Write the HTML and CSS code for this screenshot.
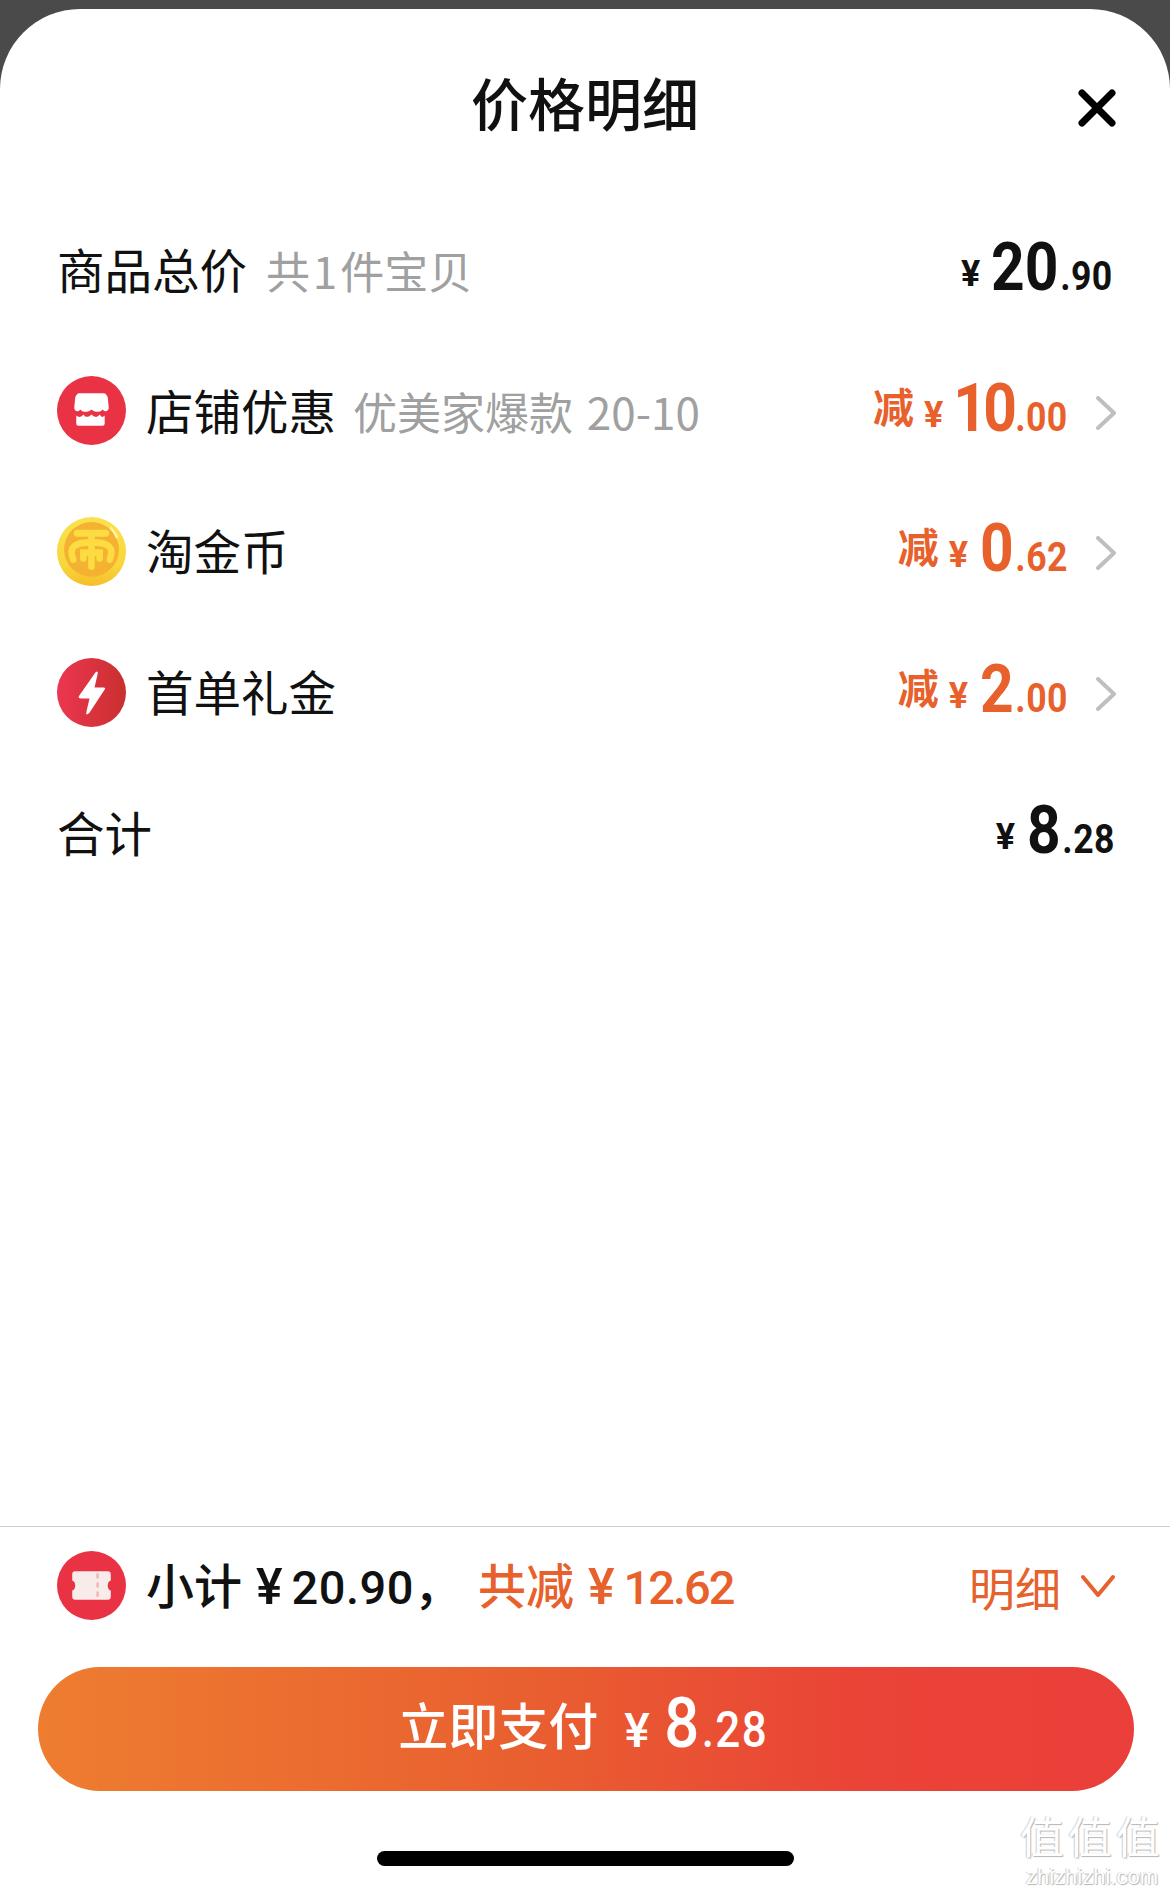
FILE: index.html
```html
<!DOCTYPE html>
<html lang="zh-CN">
<head>
  <meta charset="UTF-8">
  <meta name="viewport" content="width=device-width, initial-scale=1.0">
  <title>价格明细</title>
  <link rel="stylesheet" href="styles.css">
</head>
<body>
  <div class="sheet">
    <header class="sheet-header">
      <h1 class="title">价格明细</h1>
      <svg class="close" width="38" height="38" viewBox="0 0 38 38">
        <path d="M4 4 L34 34 M34 4 L4 34" stroke="#000" stroke-width="7" stroke-linecap="round" fill="none"/>
      </svg>
    </header>

    <ul class="rows">
      <li class="row">
        <span class="label">商品总价</span>
        <span class="note note-tight">共 1 件宝贝</span>
        <span class="price price-plain">
          <span class="yen">¥</span><span class="num num-wide"><span class="big">20</span><span class="dec">.90</span></span>
        </span>
      </li>
      <li class="row">
        <svg class="icon" viewBox="0 0 68 68">
          <circle cx="34" cy="34" r="34" fill="#e93344"/>
          <path d="M22 17 H46 C48 17 49 19 50 21 L51 31 C51 35 47 36 45 33 C43 36 37 36 34 33 C31 36 25 36 23 33 C21 36 17 35 17 31 L18 21 C19 19 20 17 22 17 Z" fill="#fff"/>
          <path d="M19 39 C21 41 24 41 26 38 C28 41 31 41 34 38 C37 41 40 41 42 38 C44 41 45 41 47 39 V47 Q47 49 45 49 H21 Q19 49 19 47 Z" fill="#fff"/>
        </svg>
        <span class="label">店铺优惠</span>
        <span class="note note-wide">优美家爆款 20-10</span>
        <span class="price price-cut">
          <span class="cut">减</span><span class="yen">¥</span><span class="num num-wide"><span class="big big-tight">10</span><span class="dec">.00</span></span>
        </span>
        <svg class="chevron" width="20" height="34" viewBox="0 0 20 34">
          <path d="M2 2 L18 17 L2 32" stroke="#bfbfbf" stroke-width="4" stroke-linecap="round" stroke-linejoin="round" fill="none"/>
        </svg>
      </li>
      <li class="row">
        <svg class="icon" viewBox="0 0 68 68">
          <defs>
            <linearGradient id="coinEdge" x1="0" y1="0" x2="0" y2="1">
              <stop offset="0" stop-color="#fae24c"/>
              <stop offset="0.7" stop-color="#f9d63a"/>
              <stop offset="1" stop-color="#f6bd2c"/>
            </linearGradient>
          </defs>
          <circle cx="34" cy="34" r="34" fill="url(#coinEdge)"/>
          <circle cx="34" cy="32" r="27" fill="#f4b132"/>
          <path d="M53 11 Q57 15 59 20" stroke="#fff3a8" stroke-width="2.5" stroke-linecap="round" fill="none"/>
          <path d="M20 16 H48" stroke="#fcdc40" stroke-width="7" stroke-linecap="round" fill="none"/>
          <path d="M34 18 V49 M16 42 C11 29 18 25 34 25 C50 25 57 29 52 42 M26 41 V35 H42 V41" stroke="#fcdc40" stroke-width="6.5" stroke-linecap="round" fill="none"/>
        </svg>
        <span class="label">淘金币</span>
        <span class="price price-cut">
          <span class="cut">减</span><span class="yen">¥</span><span class="num"><span class="big">0</span><span class="dec">.62</span></span>
        </span>
        <svg class="chevron" width="20" height="34" viewBox="0 0 20 34">
          <path d="M2 2 L18 17 L2 32" stroke="#bfbfbf" stroke-width="4" stroke-linecap="round" stroke-linejoin="round" fill="none"/>
        </svg>
      </li>
      <li class="row">
        <svg class="icon" viewBox="0 0 68 68">
          <defs>
            <linearGradient id="boltBg" x1="0" y1="0" x2="1" y2="0">
              <stop offset="0" stop-color="#ec3650"/>
              <stop offset="1" stop-color="#c9302f"/>
            </linearGradient>
          </defs>
          <circle cx="34" cy="34" r="34" fill="url(#boltBg)"/>
          <path d="M38 14 Q41 12 40 16 L37 29 H46 Q48 29 47 31 L32 54 Q28 58 29 53 L32 40 H24 Q20 40 22 37 Z" fill="#fff"/>
        </svg>
        <span class="label">首单礼金</span>
        <span class="price price-cut">
          <span class="cut">减</span><span class="yen">¥</span><span class="num"><span class="big">2</span><span class="dec">.00</span></span>
        </span>
        <svg class="chevron" width="20" height="34" viewBox="0 0 20 34">
          <path d="M2 2 L18 17 L2 32" stroke="#bfbfbf" stroke-width="4" stroke-linecap="round" stroke-linejoin="round" fill="none"/>
        </svg>
      </li>
      <li class="row">
        <span class="label">合计</span>
        <span class="price price-total">
          <span class="yen">¥</span><span class="num"><span class="big">8</span><span class="dec">.28</span></span>
        </span>
      </li>
    </ul>

    <footer class="footer">
      <div class="summary">
        <svg class="icon" viewBox="0 0 68 68">
          <circle cx="34" cy="34" r="34" fill="#e93344"/>
          <path d="M18 20 H50 Q53 20 53 23 V29 C49 30 49 38 53 39 V45 Q53 48 50 48 H18 Q15 48 15 45 V39 C19 38 19 30 15 29 V23 Q15 20 18 20 Z" fill="#f7ecea"/>
          <path d="M40 22 V46" stroke="#eeb9b5" stroke-width="2.5" stroke-dasharray="5 4" fill="none"/>
        </svg>
        <span class="sum-text">小计<span class="sum-yen">¥</span><span class="sum-num">20.90</span>，</span>
        <span class="sum-cut">共减<span class="sum-yen">¥</span><span class="sum-num sum-num-tight">12.62</span></span>
        <span class="detail">明细</span>
        <svg class="detail-arrow" width="34" height="24" viewBox="0 0 34 24">
          <path d="M2 3 L17 21 L32 3" stroke="#e5622d" stroke-width="4" stroke-linecap="round" stroke-linejoin="round" fill="none"/>
        </svg>
      </div>
      <button class="pay">
        <span class="pay-text">立即支付</span>
        <span class="pay-price"><span class="pay-yen">¥</span><span class="pay-num"><span class="pay-big">8</span><span class="pay-dec">.28</span></span></span>
      </button>
      <div class="home-bar"></div>
    </footer>

    <div class="watermark">
      <span class="mark-big">值值值</span>
      <span class="mark-small">zhizhizhi.com</span>
    </div>
  </div>
</body>
</html>
```

FILE: styles.css
```css
* {
  box-sizing: border-box;
}
body {
  margin: 0;
  background-color: #4a4a4a;
  font-family: "Noto Sans CJK SC", "Noto Sans", sans-serif;
  color: #111;
}
.sheet {
  position: relative;
  width: 1170px;
  height: 1881px;
  margin-top: 9px;
  background: #fff;
  border-radius: 80px 80px 0 0;
  display: flex;
  flex-direction: column;
  overflow: hidden;
}
.sheet-header {
  height: 191px;
  display: grid;
  grid-template-columns: 1fr auto 1fr;
  align-items: start;
}
.title {
  grid-column: 2;
  margin: 50px 0 0;
  font-size: 57px;
  line-height: 84px;
  font-weight: 500;
  color: #111;
}
.close {
  grid-column: 3;
  justify-self: end;
  margin: 80px 54px 0 0;
}
.rows {
  list-style: none;
  margin: 0;
  padding: 0 54px 0 57px;
  flex: 1;
}
.row {
  height: 140.6px;
  display: flex;
  align-items: center;
}
.icon {
  width: 69px;
  height: 69px;
  flex: none;
  margin-right: 20px;
}
.label {
  font-size: 47.5px;
  line-height: 60px;
  padding-bottom: 2px;
  color: #111;
}
.note {
  margin-left: 17px;
  font-size: 44px;
  line-height: 60px;
  color: #a0a0a0;
}
.note-tight {
  margin-left: 19px;
  word-spacing: -7px;
}
.note-wide {
  word-spacing: 4px;
}
/* prices: the reference digits are a narrow DIN, so the digit group is squeezed
   and pulled back by what the squeeze leaves empty */
.price {
  margin-left: auto;
  margin-bottom: 4px;
  white-space: nowrap;
  font-family: Roboto, sans-serif;
  font-weight: 700;
}
.price-plain {
  margin-right: 3px;
}
.price-total {
  margin-right: 1px;
}
.price-cut {
  color: #e8612c;
}
.cut {
  font-family: "Noto Sans CJK SC", sans-serif;
  font-size: 41px;
  font-weight: 700;
  margin-right: 10px;
  vertical-align: 8px;
}
.yen {
  font-size: 36px;
  margin-right: 12px;
  vertical-align: 4px;
}
.num {
  display: inline-flex;
  align-items: baseline;
  transform: scaleX(0.89);
  transform-origin: right center;
  margin-left: -11px;
}
.num-wide {
  margin-left: -16px;
}
.big {
  font-size: 66px;
  line-height: 68px;
}
.big-tight {
  letter-spacing: -4px;
}
.dec {
  font-size: 40px;
  margin-left: 2px;
  letter-spacing: 0.5px;
}
.chevron {
  flex: none;
  margin: 4px 0 0 28px;
}
.footer {
  border-top: 1px solid #cfcfcf;
  height: 364px;
  flex: none;
  display: flex;
  flex-direction: column;
  align-items: center;
}
.summary {
  width: 100%;
  padding: 22px 55px 0 57px;
  display: flex;
  align-items: center;
}
.sum-text, .sum-cut {
  font-size: 48px;
  font-weight: 500;
  line-height: 68px;
}
.sum-cut {
  margin-left: 16px;
  color: #e8612c;
}
.sum-yen {
  font-family: Roboto, sans-serif;
  font-size: 50px;
  font-weight: 500;
  margin: 0 9px 0 14px;
}
.sum-num {
  font-family: Roboto, sans-serif;
  font-weight: 500;
  font-size: 47px;
  letter-spacing: 0.5px;
}
.sum-num-tight {
  letter-spacing: -2px;
}
.detail {
  margin-left: auto;
  font-size: 46px;
  color: #e5622d;
}
.detail-arrow {
  flex: none;
  margin-left: 20px;
}
.pay {
  width: 1096px;
  height: 124px;
  margin: 45px 0 0 2px;
  padding: 0 6px 0 0;
  border: none;
  border-radius: 62px;
  background: linear-gradient(90deg, #ee7d30 0%, #e95f30 45%, #ea4337 75%, #ea3f3a 100%);
  color: #fff;
  font-family: inherit;
  display: flex;
  align-items: center;
  justify-content: center;
  gap: 26px;
}
.pay-text {
  font-size: 50px;
  line-height: 70px;
  font-weight: 500;
  margin-top: -12px;
}
.pay-price {
  display: flex;
  align-items: baseline;
  margin-top: -12px;
  font-family: Roboto, sans-serif;
  font-weight: 500;
}
.pay-yen {
  font-size: 48px;
}
.pay-num {
  display: flex;
  align-items: baseline;
  transform: scaleX(0.88);
  transform-origin: right center;
}
.pay-big {
  font-size: 70px;
}
.pay-dec {
  font-size: 50px;
  margin-left: 3px;
  letter-spacing: 1.5px;
}
.home-bar {
  width: 417px;
  height: 15px;
  margin-top: 60px;
  border-radius: 8px;
  background: #000;
}
.watermark {
  position: absolute;
  right: 5px;
  bottom: 2px;
  width: 146px;
  display: flex;
  flex-direction: column;
  align-items: center;
  gap: 8px;
  color: #fff;
  white-space: nowrap;
  text-shadow: 1px 1px 1px #b5b5b5, -1px 0 1px #cfcfcf;
}
.mark-big {
  font-size: 44px;
  line-height: 46px;
  letter-spacing: 4px;
}
.mark-small {
  font-family: "Liberation Sans", sans-serif;
  font-size: 22px;
  line-height: 22px;
}
```
